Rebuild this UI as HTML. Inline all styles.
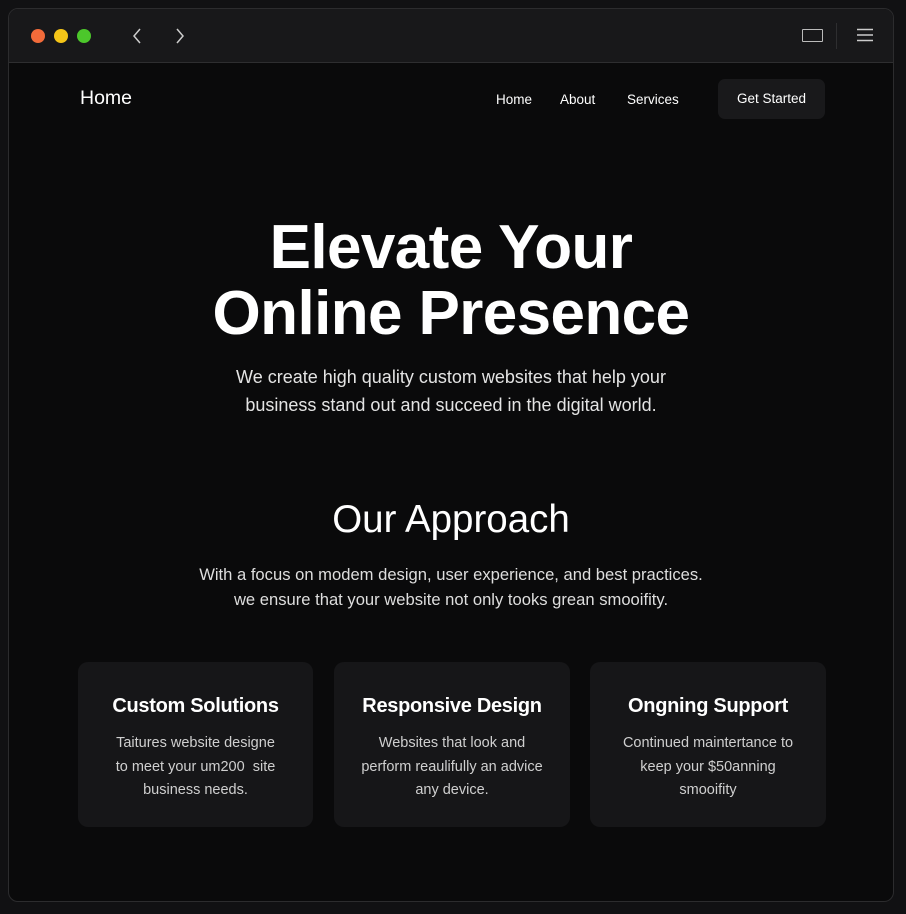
<!DOCTYPE html>
<html><head><meta charset="utf-8"><style>
*{margin:0;padding:0;box-sizing:border-box}
body{width:906px;height:914px;background:#111113;font-family:"Liberation Sans",sans-serif;color:#fff;position:relative;overflow:hidden}
.win{position:absolute;left:8px;top:8px;width:886px;height:894px;border:1px solid #2c2c2e;border-radius:10px;background:#0a0a0b;overflow:hidden}
.bar{position:absolute;left:0;top:0;width:100%;height:54px;background:#18181a;border-bottom:1px solid #2e2e30}
.dot{position:absolute;top:20px;width:14px;height:14px;border-radius:50%}
.c{text-align:center;position:absolute;left:0;width:100%}
.card{position:absolute;top:653px;height:165px;background:#161618;border-radius:10px;text-align:center}
.card h3{font-size:20px;font-weight:bold;margin-top:33px;letter-spacing:-0.3px}
.card p{font-size:14.5px;color:#cfcfcf;line-height:23.5px;margin-top:14px}
</style></head><body>
<div class="win">
<div class="bar">
<div class="dot" style="left:22px;background:#f26b3a"></div>
<div class="dot" style="left:45px;background:#f5c518"></div>
<div class="dot" style="left:68px;background:#4cc72b"></div>
<svg style="position:absolute;left:122px;top:18px" width="60" height="18"><path d="M9 2 L3 9 L9 16" stroke="#ccc" stroke-width="1.5" fill="none"/><path d="M46 2 L52 9 L46 16" stroke="#ccc" stroke-width="1.5" fill="none"/></svg>
<div style="position:absolute;left:793px;top:20px;width:21px;height:13px;border:1.5px solid #bbb;border-radius:1px"></div>
<div style="position:absolute;left:827px;top:14px;width:1px;height:26px;background:#2e2e30"></div>
<svg style="position:absolute;left:848px;top:19px" width="17" height="14"><path d="M0 1.5H16M0 7H16M0 12.5H16" stroke="#ccc" stroke-width="1.6"/></svg>
</div>
<div style="position:absolute;left:71px;top:78px;font-size:19.5px;font-weight:500">Home</div>
<div style="position:absolute;left:487px;top:83px;font-size:13.5px">Home</div>
<div style="position:absolute;left:551px;top:83px;font-size:13.5px">About</div>
<div style="position:absolute;left:618px;top:83px;font-size:13.5px">Services</div>
<div style="position:absolute;left:709px;top:70px;width:107px;height:40px;background:#19191b;border-radius:7px;font-size:13.5px;text-align:center;line-height:40px">Get Started</div>
<div class="c" style="top:206px;font-size:62px;font-weight:bold;line-height:66px;letter-spacing:-0.6px">Elevate Your<br>Online Presence</div>
<div class="c" style="top:354px;font-size:18px;line-height:28px;color:#e4e4e4">We create high quality custom websites that help your<br>business stand out and succeed in the digital world.</div>
<div class="c" style="top:488px;font-size:38.5px;line-height:46px">Our Approach</div>
<div class="c" style="top:553px;font-size:16.6px;line-height:25px;color:#dedede">With a focus on modem design, user experience, and best practices.<br>we ensure that your website not only tooks grean smooifity.</div>
<div class="card" style="left:69px;width:235px"><h3>Custom Solutions</h3><p>Taitures website designe<br>to meet your um200&nbsp; site<br>business needs.</p></div>
<div class="card" style="left:325px;width:236px"><h3>Responsive Design</h3><p>Websites that look and<br>perform reaulifully an advice<br>any device.</p></div>
<div class="card" style="left:581px;width:236px"><h3>Ongning Support</h3><p>Continued maintertance to<br>keep your $50anning<br>smooifity</p></div>
</div>
</body></html>
